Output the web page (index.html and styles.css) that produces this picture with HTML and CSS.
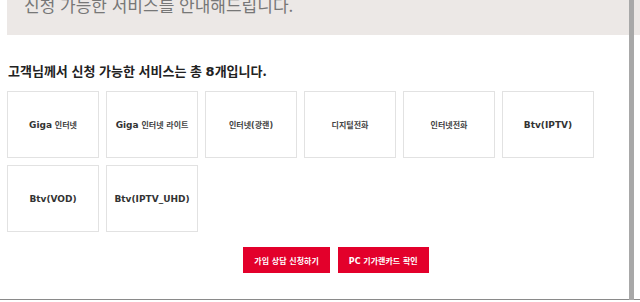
FILE: index.html
```html
<!DOCTYPE html>
<html lang="ko">
<head>
  <meta charset="UTF-8">
  <title>가입 가능 서비스 안내</title>
  <link rel="stylesheet" href="styles.css">
</head>
<body>
  <div class="page">
    <div class="notice">
      <p>신청 가능한 서비스를 안내해드립니다.</p>
    </div>

    <div class="content">
      <h2 class="result-title">고객님께서 신청 가능한 서비스는 총 <b>8</b>개입니다.</h2>

      <ul class="service-list">
        <li class="service"><span><em>Giga</em> 인터넷</span></li>
        <li class="service"><span><em>Giga</em> 인터넷 라이트</span></li>
        <li class="service"><span>인터넷(광랜)</span></li>
        <li class="service"><span>디지털전화</span></li>
        <li class="service"><span>인터넷전화</span></li>
        <li class="service"><span><em>Btv(IPTV)</em></span></li>
        <li class="service"><span><em>Btv(VOD)</em></span></li>
        <li class="service"><span><em>Btv(IPTV_UHD)</em></span></li>
      </ul>

      <div class="btn-area">
        <button class="btn-red">가입 상담 신청하기</button>
        <button class="btn-red">PC 기가랜카드 확인</button>
      </div>
    </div>
  </div>
  <div class="scroll-bar"></div>
</body>
</html>
```

FILE: styles.css
```css
* {
  box-sizing: border-box;
  font-family: "DejaVu Sans", "Noto Sans CJK KR", sans-serif;
}

body {
  margin: 0;
  background: #fff;
  width: 640px;
  height: 302px;
  overflow: hidden;
}

.page {
  height: 300px;
  padding-left: 7px;
  border-bottom: 1px solid #8a8a8a;
  overflow: hidden;
}

.notice {
  height: 35px;
  background: #ece8e6;
  padding-left: 17px;
  overflow: hidden;
}

.notice p {
  margin: -6px 0 0;
  font-family: "Noto Sans CJK KR", sans-serif;
  font-size: 17px;
  line-height: 22px;
  color: #777;
}

.content {
  width: 622px;
}

.result-title {
  margin: 29px 0 0 1px;
  font-family: "Noto Sans CJK KR", sans-serif;
  font-size: 13px;
  line-height: 14px;
  font-weight: bold;
  color: #222;
}

.result-title b {
  font-family: "DejaVu Sans", sans-serif;
}

.service-list {
  list-style: none;
  margin: 12px 0 0;
  padding: 0;
  display: grid;
  grid-template-columns: repeat(6, 92px);
  grid-auto-rows: 67px;
  gap: 7px;
}

.service {
  display: flex;
  align-items: center;
  justify-content: center;
  border: 1px solid #e2e2e2;
  font-size: 8px;
  font-weight: bold;
  color: #444;
}

.service em {
  font-style: normal;
  font-size: 9px;
  color: #333;
}

.btn-area {
  display: flex;
  justify-content: center;
  gap: 8px;
  margin-top: 15px;
  padding-left: 36px;
}

.btn-red {
  height: 26px;
  padding: 0 11px;
  border: none;
  background: #e3002b;
  color: #fff;
  font-size: 8px;
  font-weight: bold;
  cursor: pointer;
}

.scroll-bar {
  position: absolute;
  top: 0;
  left: 629px;
  width: 5px;
  height: 300px;
  background: #a8a8a8;
}
```
